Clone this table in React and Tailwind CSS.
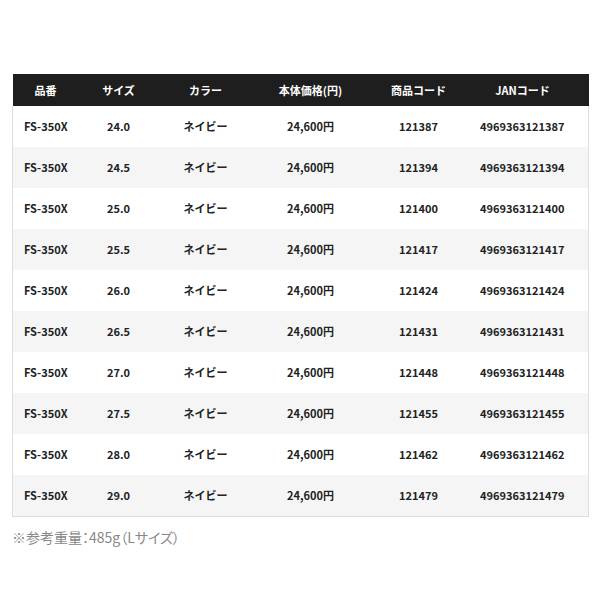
import React from "react";

const rows = [
  ["24.0", "121387"],
  ["24.5", "121394"],
  ["25.0", "121400"],
  ["25.5", "121417"],
  ["26.0", "121424"],
  ["26.5", "121431"],
  ["27.0", "121448"],
  ["27.5", "121455"],
  ["28.0", "121462"],
  ["29.0", "121479"],
];

const font = { fontFamily: '"Noto Sans CJK JP", "Noto Sans", sans-serif' };

export default function App() {
  return (
    <div className="w-[600px] h-[600px] bg-white pt-[74px] px-[12px]" style={font}>
      <table className="w-[576px] table-fixed border-collapse text-[11px] font-bold text-[#222]">
        <colgroup>
          <col className="w-[66px]" />
          <col className="w-[80px]" />
          <col className="w-[94px]" />
          <col className="w-[116px]" />
          <col className="w-[100px]" />
          <col className="w-[120px]" />
        </colgroup>
        <thead>
          <tr className="bg-[#1e1e1e] text-white h-[32px]">
            <th className="text-center font-bold">品番</th>
            <th className="text-center font-bold">サイズ</th>
            <th className="text-center font-bold">カラー</th>
            <th className="text-center font-bold">本体価格(円)</th>
            <th className="text-center font-bold">商品コード</th>
            <th className="text-center font-bold pr-[12px]">JANコード</th>
          </tr>
        </thead>
        <tbody className="border-x border-b border-[#dddddd]">
          {rows.map(([size, code], i) => (
            <tr key={code} className={i % 2 === 0 ? "bg-white h-[41px]" : "bg-[#f5f5f5] h-[41px]"}>
              <td className="text-center">FS-350X</td>
              <td className="text-center">{size}</td>
              <td className="text-center">ネイビー</td>
              <td className="text-center">24,600円</td>
              <td className="text-center">{code}</td>
              <td className="text-center pr-[12px]">4969363{code}</td>
            </tr>
          ))}
        </tbody>
      </table>
      <p className="mt-[10px] text-[14px] text-[#888] leading-[20px] [font-feature-settings:'palt']">※参考重量：485g（Lサイズ）</p>
    </div>
  );
}
